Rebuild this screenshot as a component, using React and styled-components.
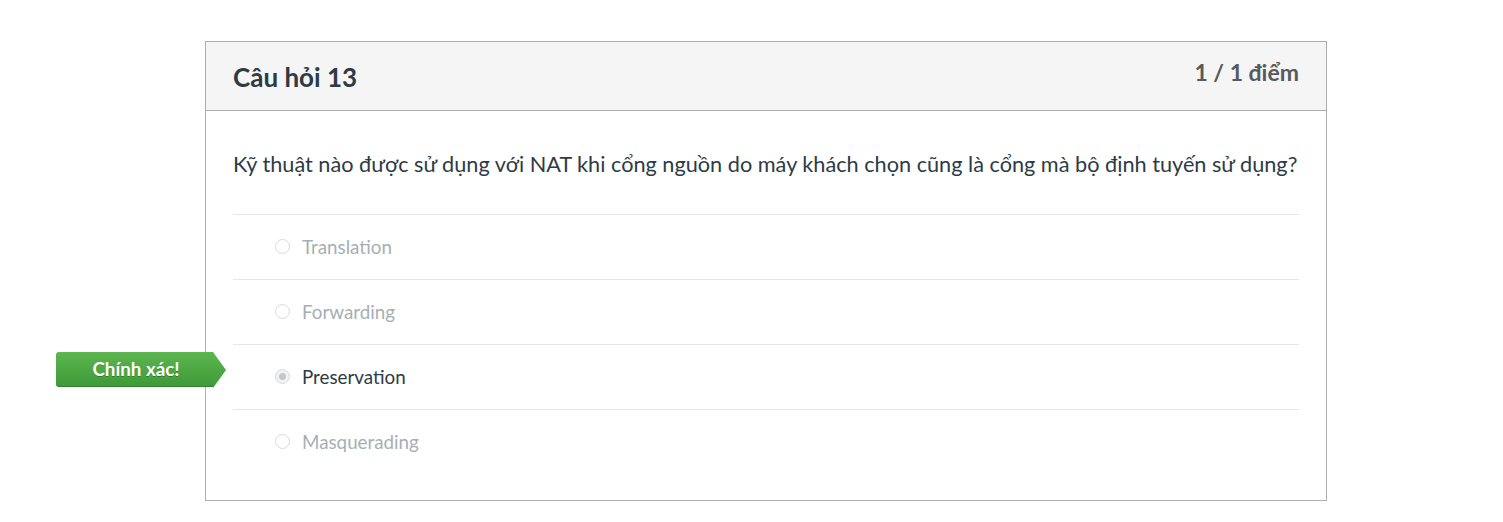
import React from "react";
import styled, { createGlobalStyle } from "styled-components";

const GlobalStyle = createGlobalStyle`
  body {
    margin: 0;
    background: #ffffff;
    font-family: Lato, "Noto Sans", "Liberation Sans", sans-serif;
  }
`;

const answers = [
  { id: 1, text: "Translation" },
  { id: 2, text: "Forwarding" },
  { id: 3, text: "Preservation", chosen: true },
  { id: 4, text: "Masquerading" },
];

function App() {
  return (
    <Page>
      <GlobalStyle />
      <Card>
        <Header>
          <Title>Câu hỏi 13</Title>
          <Points>1 / 1 điểm</Points>
        </Header>
        <Body>
          <Question>
            Kỹ thuật nào được sử dụng với NAT khi cổng nguồn do máy khách chọn
            cũng là cổng mà bộ định tuyến sử dụng?
          </Question>
          <AnswerList>
            {answers.map((a) => (
              <AnswerRow key={a.id}>
                {a.chosen && <Badge>Chính xác!</Badge>}
                <Radio $checked={a.chosen} />
                <AnswerText $chosen={a.chosen}>{a.text}</AnswerText>
              </AnswerRow>
            ))}
          </AnswerList>
        </Body>
      </Card>
    </Page>
  );
}

const Page = styled.div`
  padding: 41px 0 0 205px;
`;

const Card = styled.div`
  width: 1120px;
  height: 458px;
  border: 1px solid #adadad;
  background: #fff;
`;

const Header = styled.div`
  height: 68px;
  display: flex;
  justify-content: space-between;
  align-items: flex-start;
  padding: 0 27px 0 27px;
  background: #f5f5f5;
  border-bottom: 1px solid #adadad;
`;

const Title = styled.h2`
  margin: 19px 0 0;
  font-size: 26px;
  line-height: 32px;
  font-weight: 700;
  color: #2d3b45;
`;

const Points = styled.div`
  margin-top: 16px;
  font-size: 23px;
  line-height: 28px;
  font-weight: 700;
  color: #555a5e;
`;

const Body = styled.div`
  padding: 0 27px;
`;

const Question = styled.div`
  padding: 38px 0 34px;
  font-size: 21.7px;
  line-height: 31px;
  color: #2d3b45;
`;

const AnswerList = styled.div`
  border-top: 1px solid #e6e6e6;
`;

const AnswerRow = styled.div`
  position: relative;
  height: 64px;
  display: flex;
  align-items: center;
  padding-left: 42px;
  & + & {
    border-top: 1px solid #e6e6e6;
  }
`;

const Radio = styled.span`
  width: 13px;
  height: 13px;
  margin-top: -2px;
  border-radius: 50%;
  border: 1px solid #d7dadd;
  background: ${(p) => (p.$checked ? "#f2f2f2" : "#fff")};
  display: flex;
  align-items: center;
  justify-content: center;
  &::after {
    content: "";
    display: ${(p) => (p.$checked ? "block" : "none")};
    width: 7px;
    height: 7px;
    border-radius: 50%;
    background: #c4c7c9;
  }
`;

const AnswerText = styled.span`
  margin-left: 12px;
  margin-top: -2px;
  font-size: 18.8px;
  color: ${(p) => (p.$chosen ? "#2d3b45" : "#a5afb5")};
`;

const Badge = styled.div`
  position: absolute;
  left: -177px;
  top: 7px;
  width: 157px;
  height: 35px;
  display: flex;
  align-items: center;
  justify-content: center;
  padding-left: 3px;
  padding-bottom: 2px;
  box-sizing: border-box;
  border-radius: 3px 0 0 3px;
  background: linear-gradient(#5db64f, #3e9a38);
  border-bottom: 1px solid #367f30;
  color: #fff;
  font-size: 18.8px;
  font-weight: 700;
  text-shadow: 0 1px 0 rgba(0, 0, 0, 0.25);
  &::after {
    content: "";
    position: absolute;
    right: -13px;
    top: 0;
    width: 13px;
    height: 36px;
    background: linear-gradient(#5db64f, #3e9a38);
    clip-path: polygon(0 0, 100% 50%, 0 100%);
  }
`;

export default App;
